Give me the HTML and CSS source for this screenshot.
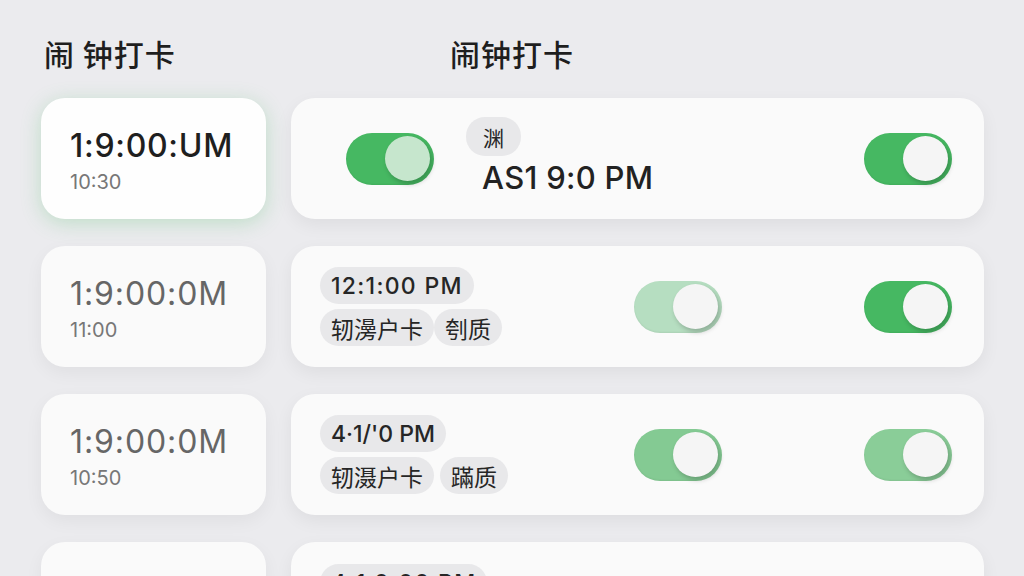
FILE: index.html
```html
<!DOCTYPE html>
<html lang="zh">
<head>
<meta charset="utf-8">
<title>闹钟打卡</title>
<link rel="stylesheet" href="styles.css">
</head>
<body>
<div class="page">
  <header class="header">
    <h1 class="title">闹 钟打卡</h1>
    <h1 class="title title-right">闹钟打卡</h1>
  </header>
  <main class="grid">
    <div class="time-card active">
      <div class="big bold">1:9:00:UM</div>
      <div class="small">10:30</div>
    </div>
    <div class="row-card first">
      <span class="toggle on"><span class="knob tinted"></span></span>
      <div class="stack">
        <span class="chip chip-sm">渊</span>
        <div class="row-time">AS1 9:0 PM</div>
      </div>
      <span class="toggle on push"><span class="knob"></span></span>
    </div>

    <div class="time-card">
      <div class="big">1:9:00:0M</div>
      <div class="small">11:00</div>
    </div>
    <div class="row-card">
      <div class="chips">
        <div class="chip-line"><span class="chip wide">12:1:00 PM</span></div>
        <div class="chip-line tight"><span class="chip">轫澷户卡</span><span class="chip">刳质</span></div>
      </div>
      <span class="toggle pale"><span class="knob"></span></span>
      <span class="toggle on push"><span class="knob"></span></span>
    </div>

    <div class="time-card">
      <div class="big">1:9:00:0M</div>
      <div class="small">10:50</div>
    </div>
    <div class="row-card">
      <div class="chips">
        <div class="chip-line"><span class="chip">4·1/'0 PM</span></div>
        <div class="chip-line"><span class="chip">轫滠户卡</span><span class="chip">蹣质</span></div>
      </div>
      <span class="toggle mid"><span class="knob"></span></span>
      <span class="toggle mid2 push"><span class="knob"></span></span>
    </div>

    <div class="time-card"></div>
    <div class="row-card top">
      <div class="chips">
        <div class="chip-line"><span class="chip wide">4:1 0:00 PM</span></div>
      </div>
    </div>
  </main>
</div>
</body>
</html>
```

FILE: styles.css
```css
* { box-sizing: border-box; margin: 0; padding: 0; }

html, body {
  width: 1024px;
  height: 576px;
  overflow: hidden;
}

body {
  background: #ebebee;
  font-family: Inter, "Noto Sans CJK SC", "Noto Sans", sans-serif;
  color: #222;
}

.page {
  padding: 34px 0 0 41px;
}

.header {
  display: grid;
  grid-template-columns: 225px 693px;
  column-gap: 25px;
  height: 64px;
}

.title {
  font-family: "Noto Sans CJK SC", sans-serif;
  font-size: 30px;
  font-weight: 500;
  line-height: 38px;
  letter-spacing: 1px;
  color: #1e1e1e;
  padding-left: 3px;
}

.title-right {
  padding-left: 159px;
}

.grid {
  display: grid;
  grid-template-columns: 225px 693px;
  grid-auto-rows: 121px;
  column-gap: 25px;
  row-gap: 27px;
}

.time-card {
  background: #fafafa;
  border-radius: 24px;
  box-shadow: 0 6px 18px rgba(0, 0, 0, 0.05);
  padding: 28px 0 0 29px;
  display: flex;
  flex-direction: column;
}

.time-card.active {
  background: #fefefe;
  box-shadow: 0 4px 20px rgba(76, 187, 99, 0.28);
}

.big {
  font-size: 32px;
  font-weight: 400;
  line-height: 40px;
  color: #666;
  letter-spacing: 0.9px;
}

.big.bold {
  font-weight: 500;
  color: #1f1f1f;
  letter-spacing: 0.7px;
}

.small {
  font-size: 20px;
  line-height: 26px;
  color: #777;
  margin-top: 3px;
}

.row-card {
  background: #fafafa;
  border-radius: 24px;
  box-shadow: 0 6px 18px rgba(0, 0, 0, 0.06);
  display: flex;
  align-items: center;
  padding: 0 32px 0 29px;
}

.row-card.first {
  padding-left: 55px;
}

.row-card.top {
  align-items: flex-start;
  padding-top: 22px;
}

.stack {
  display: flex;
  flex-direction: column;
  align-items: flex-start;
  margin-left: 32px;
  padding-bottom: 2px;
}

.row-time {
  font-size: 31px;
  font-weight: 500;
  line-height: 40px;
  color: #222;
  margin-left: 16px;
  margin-top: 2px;
  letter-spacing: 0.3px;
}

.chips {
  width: 314px;
  display: flex;
  flex-direction: column;
  gap: 5px;
}

.chip-line {
  display: flex;
  gap: 6px;
}

.chip-line.tight {
  gap: 0;
}

.chip {
  display: inline-flex;
  align-items: center;
  height: 37px;
  padding: 0 11px;
  border-radius: 19px;
  background: #e8e8ea;
  font-family: Inter, "Noto Sans CJK SC", sans-serif;
  font-size: 23px;
  font-weight: 500;
  color: #262626;
  white-space: nowrap;
}

.chip.wide {
  letter-spacing: 1.3px;
}

.chip-line + .chip-line .chip {
  font-family: "Noto Sans CJK SC", sans-serif;
  font-weight: 400;
  font-size: 23px;
}

.chip-sm {
  height: 39px;
  padding: 0 17px;
  font-family: "Noto Sans CJK SC", sans-serif;
  font-size: 21px;
  font-weight: 400;
}

.toggle {
  flex: 0 0 auto;
  width: 88px;
  height: 52px;
  border-radius: 26px;
  background: #46b862;
  display: flex;
  align-items: center;
  justify-content: flex-end;
  padding-right: 4px;
  box-shadow: inset 0 -1px 2px rgba(0, 0, 0, 0.06);
}

.toggle.pale { background: #b6dec1; }
.toggle.mid { background: #84ca93; }
.toggle.mid2 { background: #8acd98; }

.push { margin-left: auto; }

.knob {
  width: 45px;
  height: 45px;
  border-radius: 50%;
  background: #f5f5f5;
  box-shadow: 2px 3px 5px rgba(0, 0, 0, 0.22);
}

.knob.tinted {
  background: #c6e6cd;
}
```
